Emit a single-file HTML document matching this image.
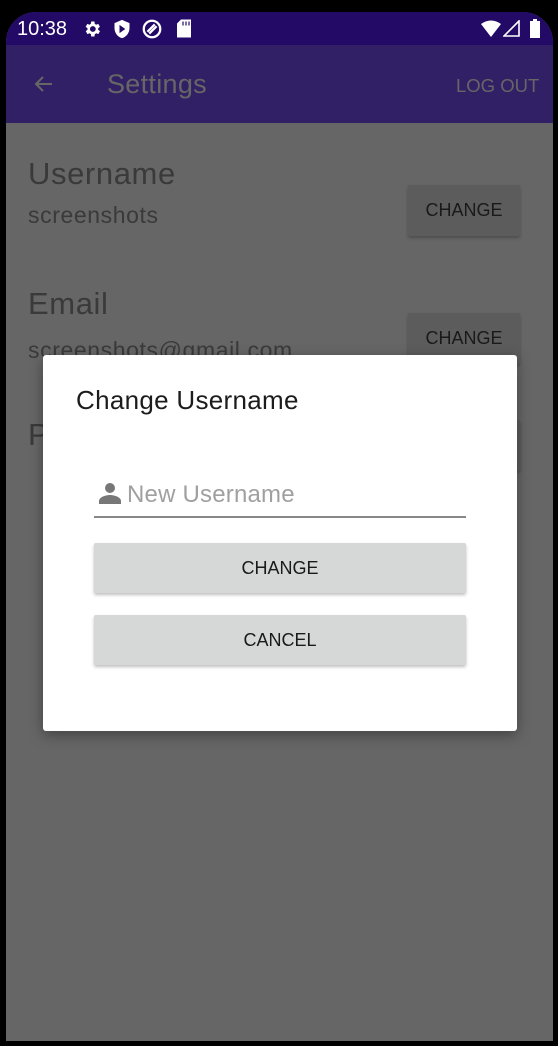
<!DOCTYPE html>
<html><head><meta charset="utf-8"><style>
*{margin:0;padding:0;box-sizing:border-box}
body{width:558px;height:1046px;background:#000;position:relative;overflow:hidden;font-family:"Liberation Sans",Roboto,sans-serif}
#scr{position:absolute;left:6px;top:12px;width:547px;height:1029px;background:#666;border-radius:30px 30px 0 0;overflow:hidden}
#sb{position:absolute;left:0;top:0;width:100%;height:33px;background:#230a66;color:#fff}
#tb{position:absolute;left:0;top:33px;width:100%;height:78px;background:#322066}
.bg{position:absolute;color:#3a3a3a}
.btn{position:absolute;background:#5c5c5c;color:#1a1a1a;font-size:18px;text-align:center;border-radius:2px;box-shadow:0 2px 3px rgba(0,0,0,.25)}
#dlg{position:absolute;left:43px;top:355px;width:474px;height:376px;background:#fff;border-radius:3px;box-shadow:0 4px 14px rgba(0,0,0,.35)}
.db{position:absolute;left:51px;width:372px;height:50px;background:#d6d7d7;border-radius:2px;box-shadow:0 2px 3px rgba(0,0,0,.25);font-size:18px;color:#1a1a1a;text-align:center;line-height:50px}
</style></head><body>
<div id="scr">
 <div id="sb">
  <span style="position:absolute;left:11px;top:6px;font-size:20px">10:38</span>
  <svg style="position:absolute;left:76px;top:7px" width="20" height="20" viewBox="0 0 24 24"><path fill="#fff" d="M19.4 13a7.5 7.5 0 000-2l2.1-1.6-2-3.5-2.5 1a7 7 0 00-1.7-1L15 3h-4l-.4 2.9a7 7 0 00-1.7 1l-2.5-1-2 3.5L6.6 11a7.5 7.5 0 000 2l-2.1 1.6 2 3.5 2.5-1a7 7 0 001.7 1L11 21h4l.4-2.9a7 7 0 001.7-1l2.5 1 2-3.5zM13 15.5a3.5 3.5 0 110-7 3.5 3.5 0 010 7z"/></svg>
  <svg style="position:absolute;left:106px;top:7px" width="20" height="20" viewBox="0 0 24 24"><path fill="#fff" d="M12 1L3 5v6c0 5.5 3.8 10.7 9 12 5.2-1.3 9-6.5 9-12V5zM9 7l7 5-7 5z"/></svg>
  <svg style="position:absolute;left:135px;top:6px" width="22" height="22" viewBox="0 0 24 24"><circle cx="12" cy="12" r="9" fill="none" stroke="#fff" stroke-width="2.5"/><path d="M7 15l8-8M9 17l8-8" stroke="#fff" stroke-width="2.5"/></svg>
  <svg style="position:absolute;left:170px;top:7px" width="16" height="19" viewBox="0 0 16 18"><path fill="#fff" d="M5 0h10v18H1V4z"/><path d="M7 2v4M10 2v4M13 2v4" stroke="#230a66" stroke-width="1.2"/></svg>
  <svg style="position:absolute;left:475px;top:8px" width="20" height="17" viewBox="0 0 20 17"><path fill="#fff" d="M0 4Q10-3 20 4L10 17z"/></svg>
  <svg style="position:absolute;left:497px;top:8px" width="17" height="17" viewBox="0 0 17 17"><path fill="none" stroke="#fff" stroke-width="1.6" d="M16 1L1 16h15z"/></svg>
  <svg style="position:absolute;left:524px;top:7px" width="10" height="19" viewBox="0 0 10 19"><path fill="#fff" d="M3 0h4v2h3v17H0V2h3z"/></svg>
 </div>
 <div id="tb">
  <svg style="position:absolute;left:26px;top:27px" width="24" height="24" viewBox="0 0 24 24"><path d="M20 12H5M11 5l-7 7 7 7" fill="none" stroke="#666" stroke-width="2"/></svg>
  <span style="position:absolute;left:101px;top:24px;font-size:27px;color:#666;letter-spacing:.3px">Settings</span>
  <span style="position:absolute;left:450px;top:30px;font-size:18.5px;color:#666">LOG OUT</span>
 </div>
 <div class="bg" style="left:22px;top:144px;font-size:31px;letter-spacing:.6px">Username</div>
 <div class="bg" style="left:22px;top:190px;font-size:23px;letter-spacing:.6px">screenshots</div>
 <div class="btn" style="left:402px;top:173px;width:112px;height:51px;line-height:51px">CHANGE</div>
 <div class="bg" style="left:22px;top:274px;font-size:31px;letter-spacing:.6px">Email</div>
 <div class="bg" style="left:22px;top:325px;font-size:23px;letter-spacing:.6px">screenshots@gmail.com</div>
 <div class="btn" style="left:402px;top:301px;width:112px;height:51px;line-height:51px">CHANGE</div>
 <div class="bg" style="left:22px;top:405px;font-size:31px">Password</div>
 <div class="btn" style="left:402px;top:408px;width:112px;height:51px;line-height:51px">CHANGE</div>
</div>
<div id="dlg">
 <div style="position:absolute;left:33px;top:30px;font-size:26px;color:#1c1c1c;letter-spacing:.3px">Change Username</div>
 <svg style="position:absolute;left:55px;top:126px" width="24" height="24" viewBox="0 0 24 24"><circle cx="12" cy="7" r="5" fill="#777"/><path d="M1 23v-3c0-4 7-6 11-6s11 2 11 6v3z" fill="#777"/></svg>
 <div style="position:absolute;left:84px;top:126px;font-size:24px;color:#a0a0a0;letter-spacing:.2px">New Username</div>
 <div style="position:absolute;left:51px;top:161px;width:372px;height:1.5px;background:#888"></div>
 <div class="db" style="top:188px">CHANGE</div>
 <div class="db" style="top:260px">CANCEL</div>
</div>
</body></html>
